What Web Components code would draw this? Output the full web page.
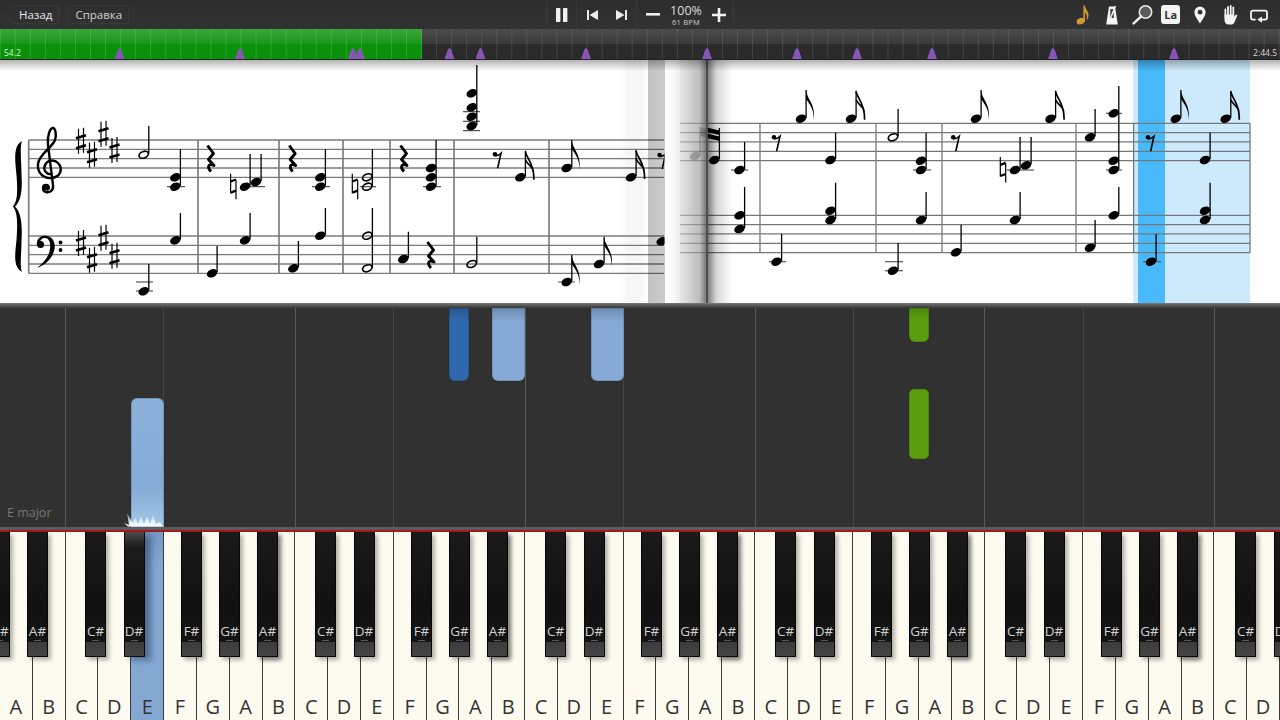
<!DOCTYPE html>
<html>
<head>
<meta charset="utf-8">
<title>Synthesia</title>
<style>
  html, body { margin: 0; height: 720px; overflow: hidden; background: #2f2f2f; }
  body { display: flex; flex-direction: column; font-family: "Open Sans", "Liberation Sans", sans-serif; }
</style>
</head>
<body>
<synth-toolbar></synth-toolbar>
<synth-timeline></synth-timeline>
<score-sheet></score-sheet>
<note-fall></note-fall>
<piano-keyboard></piano-keyboard>

<script>
class ToolButton extends HTMLElement {
  constructor() {
    super();
    this.attachShadow({ mode: 'open' });
  }

  connectedCallback() {
    const back = this.hasAttribute('back');
    this.shadowRoot.innerHTML = `
      <style>
        :host { display: block; position: relative; height: 19px; box-sizing: border-box; line-height: 18px;
          font-size: 11.5px; color: #cfcfcf; padding: 0 6px; white-space: nowrap;
          border: 1px solid ${back ? 'transparent' : '#393939'}; border-radius: 2px; }
        :host([back]) { padding: 0 7px 0 14px; color: #e6e6e6; border-left: 0; }
        svg { position: absolute; left: 0; top: -1px; }
      </style>
      ${back ? '<svg width="54" height="19"><path d="M53.5 .5H8L.7 9.5 8 18.5H53.5Z" fill="none" stroke="#393939"/></svg>' : ''}
      <slot></slot>`;
  }
}

class IconCell extends HTMLElement {
  constructor() {
    super();
    this.attachShadow({ mode: 'open' });
  }

  connectedCallback() {
    const w = this.getAttribute('width') || 30;
    this.shadowRoot.innerHTML = `
      <style>
        :host { display: flex; align-items: center; justify-content: center; height: 29px; width: ${w}px;
          box-sizing: border-box; flex: none; }
        :host([sep]) { border-right: 1px solid #393939; }
        :host([first]) { border-left: 1px solid #393939; }
      </style>
      <slot></slot>`;
  }
}

class SynthToolbar extends HTMLElement {
  constructor() {
    super();
    this.attachShadow({ mode: 'open' });
  }

  connectedCallback() {
    this.shadowRoot.innerHTML = `
      <style>
        :host { display: grid; grid-template-columns: 1fr auto 1fr; height: 29px; flex: none;
          background: linear-gradient(#2d2d2d, #323232); color: #fff; }
        .left { display: flex; gap: 8px; padding: 5px 0 0 5px; }
        .center, .right { display: flex; }
        .right { justify-content: flex-end; padding-right: 6px; }
        svg { display: block; overflow: visible; }
        .speed { text-align: center; line-height: 1; padding-top: 2px; }
        .speed b { display: block; font-weight: 400; font-size: 12.5px; color: #dcdcdc; }
        .speed i { display: block; font-style: normal; font-size: 7.5px; color: #cfcfcf; margin-top: 1px; letter-spacing: .2px; }
        .la { display: block; width: 19px; height: 19px; line-height: 20px; border-radius: 3px; background: #f4f4f4;
          color: #333; font-size: 11px; font-weight: 700; text-align: center; }
      </style>
      <div class="left">
        <tool-button back>Назад</tool-button>
        <tool-button>Справка</tool-button>
      </div>
      <div class="center">
        <icon-cell first sep width="31">
          <svg width="12" height="14"><rect x="0" width="4.4" height="14" rx=".8" fill="#f2f2f2"/><rect x="7" width="4.4" height="14" rx=".8" fill="#f2f2f2"/></svg>
        </icon-cell>
        <icon-cell width="30">
          <svg width="11" height="10"><path d="M0 0H2V10H0ZM11 0V10L2.5 5Z" fill="#ececec"/></svg>
        </icon-cell>
        <icon-cell sep width="30">
          <svg width="11" height="10"><path d="M11 0H9V10H11ZM0 0V10L8.5 5Z" fill="#ececec"/></svg>
        </icon-cell>
        <icon-cell width="31">
          <svg width="14" height="3"><rect width="14" height="2.6" fill="#f0f0f0"/></svg>
        </icon-cell>
        <icon-cell width="36">
          <div class="speed"><b>100%</b><i>61 BPM</i></div>
        </icon-cell>
        <icon-cell sep width="30">
          <svg width="14" height="14"><path d="M5.7 0H8.3V5.7H14V8.3H8.3V14H5.7V8.3H0V5.7H5.7Z" fill="#f4f4f4"/></svg>
        </icon-cell>
      </div>
      <div class="right">
        <icon-cell width="29.5">
          <svg width="24" height="24" viewBox="-12 -12 24 24"><ellipse cx="-1.3" cy="6.2" rx="4.2" ry="3.1" transform="rotate(-20 -1.3 6.2)" fill="#cf9a34"/><path d="M1.4 -9.5H3C3.2 -5 7.4 -3.5 6.4 1.5C6 3.6 5.2 5 4.4 5.6C5.2 3 5.2 -.5 3 -2.5V6.4H1.4Z" fill="#cf9a34"/></svg>
        </icon-cell>
        <icon-cell width="29.5">
          <svg width="24" height="24" viewBox="-12 -12 24 24"><path d="M-3 -8.5H3L5.8 9.5H-5.8Z" fill="#f4f4f4"/><path d="M-1.6 -6H1.4L1.8 3L-1.8 3Z" fill="#3a3a3a"/><path d="M-1.6 3.5L3.4 -9" stroke="#f4f4f4" stroke-width="1.4"/></svg>
        </icon-cell>
        <icon-cell width="29.5">
          <svg width="24" height="24" viewBox="-12 -12 24 24"><circle cx="4.5" cy="-3" r="6.2" fill="#5a5a5a" stroke="#e8e8e8" stroke-width="1.6"/><path d="M.2 1.4L-7.4 8.4" stroke="#f4f4f4" stroke-width="2.4" stroke-linecap="round"/></svg>
        </icon-cell>
        <icon-cell width="29.5"><span class="la">La</span></icon-cell>
        <icon-cell width="29.5">
          <svg width="24" height="24" viewBox="-12 -12 24 24"><path d="M0 8.5C-2 5 -5.6 .8 -5.6 -2.8A5.6 5.6 0 0 1 5.6 -2.8C5.6 .8 2 5 0 8.5Z" fill="#f6f6f6"/><circle cy="-2.8" r="2.4" fill="#333"/></svg>
        </icon-cell>
        <icon-cell width="29.5">
          <svg width="24" height="24" viewBox="-12 -12 24 24"><path d="M-4.6 2V-5.5M-2 1V-8M.7 1V-9M3.3 1.5V-7.5" stroke="#f4f4f4" stroke-width="1.8" stroke-linecap="round"/><path d="M-5.5 -.5V5C-5.6 7.5 -4 9.5 -1.5 9.5H1.5C3.4 9.5 4.2 8 5 6L7.4 .2L6 -.6L4.2 2V-.5Z" fill="#f4f4f4"/></svg>
        </icon-cell>
        <icon-cell width="29.5">
          <svg width="24" height="24" viewBox="-12 -12 24 24"><path d="M-3.4 4.6H-6A2 2 0 0 1 -8 2.6V-2.4A2 2 0 0 1 -6 -4.4H6A2 2 0 0 1 8 -2.4V2.6A2 2 0 0 1 6 4.6H2" fill="none" stroke="#f4f4f4" stroke-width="1.8"/><path d="M3 1.4V7.8L-1.8 4.6Z" fill="#f4f4f4"/></svg>
        </icon-cell>
      </div>`;
  }
}

class SynthTimeline extends HTMLElement {
  constructor() {
    super();
    this.attachShadow({ mode: 'open' });
  }

  connectedCallback() {
    const marks = [119.5, 240, 353, 360, 449.5, 480.5, 586, 707, 797, 857, 932, 1053, 1174];
    this.shadowRoot.innerHTML = `
      <style>
        :host { display: block; position: relative; height: 30px; flex: none; border-bottom: 1px solid #222;
          background: linear-gradient(#4c4c4c, #3a3a3a 50%, #2b2b2b 50%, #2a2a2a); }
        .ticks { position: absolute; inset: 0;
          background: repeating-linear-gradient(90deg, transparent 0 14px, rgba(110,110,110,.4) 14px 15px) 0.7px 0 / 15.05px 100%; }
        .done { position: relative; width: 422px; height: 100%;
          background: repeating-linear-gradient(90deg, transparent 0 14px, rgba(90,210,90,.38) 14px 15px) 0.7px 0 / 15.05px 100%,
            linear-gradient(#3aa53a, #1b961b 50%, #099209 50%, #0a8f0a); }
        .mark { position: absolute; bottom: 0; width: 10px; height: 11px; margin-left: -5px; background: #8656b4;
          clip-path: polygon(0 100%, 36% 8%, 50% 0, 64% 8%, 100% 100%); }
        span { position: absolute; top: 19px; font-size: 8.5px; line-height: 10px; color: #d6d6d6; }
        .start { left: 4px; color: #d8f0d8; }
        .end { right: 3px; }
      </style>
      <div class="ticks"></div>
      <div class="done"></div>
      ${marks.map(x => `<div class="mark" style="left:${x}px"></div>`).join('')}
      <span class="start">54.2</span>
      <span class="end">2:44.5</span>`;
  }
}

// little engraving helpers for the score
const head = (x, y, hollow) => hollow
  ? `<ellipse cx="${x}" cy="${y}" rx="4.9" ry="3.2" transform="rotate(-22 ${x} ${y})" fill="none" stroke="#000" stroke-width="1.7"/>`
  : `<ellipse cx="${x}" cy="${y}" rx="5.5" ry="4" transform="rotate(-25 ${x} ${y})" fill="#000"/>`;

const flag8 = (s, t) => `<path d="M${s} ${t}C${s + 1} ${t + 10} ${s + 10} ${t + 14} ${s + 7.5} ${t + 30}C${s + 8} ${t + 18} ${s + 3} ${t + 14} ${s} ${t + 9}Z"/>`;
const flag16 = (s, t) => `<path d="M${s} ${t + 1}C${s + 1} ${t + 8} ${s + 9} ${t + 12} ${s + 8.5} ${t + 29}M${s} ${t + 9}C${s + 2} ${t + 14} ${s + 8} ${t + 16} ${s + 8} ${t + 21}" fill="none" stroke="#000" stroke-width="1.7"/>`;

// [x, head ys, stem top, kind]
const note = ([x, ys, top, kind]) => {
  const s = x + 5.1;
  const low = Math.max(...ys);
  let out = `<path d="M${s} ${top}V${low - 1}" stroke="#000" stroke-width="1.3"/>`;
  out += ys.map(y => head(x, y, kind === 'h')).join('');
  if (kind === 8) out += flag8(s, top);
  if (kind === 16) out += flag16(s, top);
  return out;
};

const ledger = ([a, b, y]) => `<path d="M${a} ${y}H${b}" stroke="#555" stroke-width="1.2"/>`;
const sharp = ([x, y]) => `<path d="M${x - 2.5} ${y - 13}V${y + 12}M${x + 2.5} ${y - 14}V${y + 11}" stroke="#000" stroke-width="1.2"/><path d="M${x - 5} ${y - 3.5}L${x + 5} ${y - 6.5}M${x - 5} ${y + 6.5}L${x + 5} ${y + 3.5}" stroke="#000" stroke-width="2.7"/>`;
const natural = ([x, y]) => `<path d="M${x - 2.7} ${y - 13}V${y + 6.5}M${x + 2.7} ${y - 6.5}V${y + 12.5}" stroke="#000" stroke-width="1.2"/><path d="M${x - 2.7} ${y - 5.2}L${x + 2.7} ${y - 7.2}M${x - 2.7} ${y + 6}L${x + 2.7} ${y + 4}" stroke="#000" stroke-width="2.3"/>`;
const rest4 = ([x, y]) => `<path d="M${x - 2.5} ${y - 13}L${x + 3.5} ${y - 5}L${x - 1.5} ${y + 1}L${x + 4} ${y + 7}C${x - 2} ${y + 4} ${x - 3} ${y + 9} ${x + 1} ${y + 13}" fill="none" stroke="#000" stroke-width="2.9" stroke-linejoin="round"/>`;
const rest8 = ([x, y]) => `<circle cx="${x}" cy="${y}" r="2.3"/><path d="M${x} ${y + 1.3}Q${x + 3} ${y + 2} ${x + 6} ${y - 1}L${x + 2.6} ${y + 14}" fill="none" stroke="#000" stroke-width="1.6"/>`;
const staff = (x1, x2, top, color, w) => [0, 1, 2, 3, 4].map(i => `<path d="M${x1} ${top + i * 9.33}H${x2}" stroke="${color}" stroke-width="${w}"/>`).join('');
const bar = (x, y1, y2, w) => `<path d="M${x} ${y1}V${y2}" stroke="#777" stroke-width="${w}"/>`;

class ScoreSheet extends HTMLElement {
  constructor() {
    super();
    this.attachShadow({ mode: 'open' });
  }

  connectedCallback() {
    const leftNotes = [
      [143.7, [154.7], 126, 'h'], [175.3, [177.3, 186.7], 149.3], [175.3, [240.3], 213], [143.7, [291.3], 264],
      [245, [186.7], 154], [256, [182], 154], [245, [240.3], 213], [212, [273.3], 246],
      [320.3, [177.3, 186.7], 149.3], [320.3, [235.7], 208], [293.3, [268.3], 241],
      [367.3, [177.3, 186.7], 149.3, 'h'], [367.3, [235.7, 268.3], 208, 'h'],
      [431, [168, 177.3, 186.7], 140], [403.3, [259], 231.7],
      [471.7, [93.3, 107.3, 116.7, 126], 65], [471.7, [264], 236.7, 'h'],
      [520.3, [177.3], 150.7, 16], [566.7, [168], 140, 8], [631, [177.3], 150, 16],
      [566.7, [282], 255, 8], [599, [264], 236.7, 8], [661.7, [241.3], 214]
    ];
    const leftLedgers = [[167, 185, 186.7], [136, 153, 282], [136, 153, 291], [248, 265, 186.7], [312, 330, 186.7],
      [360, 376, 186.7], [423, 441, 186.7], [463, 480, 111.7], [463, 480, 121.3], [463, 480, 130.7], [558, 575, 282]];
    const rightNotes = [
      [714.3, [160], 128], [739.5, [170], 142], [739.5, [215.3, 229], 187],
      [801, [118.7], 90, 8], [851, [118.7], 90.7, 16], [830.5, [160], 132.7], [830.5, [210.7, 220], 182.7], [776.5, [261.7], 234],
      [893, [137.3], 109, 'h'], [921, [160.7, 170], 132.7], [921, [220], 192], [893, [270.7], 243],
      [976, [118.7], 90, 8], [1050.5, [118.7], 90.7, 16], [1015, [170], 137], [1026, [165.3], 137], [1015, [220], 192], [956, [252.3], 224.7],
      [1090, [137.3], 109], [1113.7, [113.3, 160.7, 170], 86], [1113.7, [215.3], 187], [1090, [247.7], 220],
      [1175.8, [118.7], 90, 8], [1225.7, [118.7], 90.7, 16], [1205, [160], 132.7], [1205, [210.7, 220], 182.7], [1151, [261.7], 234]
    ];
    const rightLedgers = [[731, 748, 170], [769, 786, 261.7], [885, 903, 261.7], [885, 903, 270.7], [913, 931, 170],
      [1007, 1034, 170], [1106, 1122, 113.3], [1106, 1122, 170], [1143, 1161, 261.7]];
    const sharpsAt = [[81, 141.7], [92, 155.7], [103.5, 134.7], [114.5, 151], [81, 244], [92, 260.7], [103.5, 238.7], [114.5, 256.7]];

    const leftPage = `
      ${staff(28.7, 664, 140, '#7c7c7c', 1.3)}
      ${staff(28.7, 664, 236, '#7c7c7c', 1.3)}
      ${bar(28.7, 140, 273.3, 1.6)}
      ${[198, 279, 343, 390, 454, 549].map(x => bar(x, 140, 273.3, 1.6)).join('')}
      ${leftLedgers.map(ledger).join('')}
      <path d="M22 141C13 146 15 160 16.5 175C17.5 190 18 200 13 206.5C18 213 17.5 225 16.5 240C15 255 13 267 22 272C19.5 266 21.5 255 21.5 240C22.5 225 21 212 15 206.5C21 201 22.5 190 21.5 175C21.5 160 19.5 147 22 141Z"/>
      <path d="M52 174C46 175 43 170 45 165C47 160 54 159 58 163C63 168 61 177 52 178C43 179 37 172 38 164C39 154 52 148 55 140C57 134 55 128 53 128C50 128 47 136 48 145L53 185C54 191 49 193 46 192C42 191 42 185 46 185C49 185 50 189 47 190" fill="none" stroke="#000" stroke-width="2.4"/>
      <circle cx="46" cy="187.5" r="2.8"/>
      <path d="M37 245C36 238 42 235 47 236C54 237 56 245 54 251C52 259 45 265 37 268C43 263 49 257 50 249C51 243 49 238 45 238C42 238 40 240 40 243Z"/>
      <circle cx="40.5" cy="244.5" r="3.5"/>
      <circle cx="60.5" cy="242.5" r="1.9"/><circle cx="60.5" cy="250" r="1.9"/>
      ${sharpsAt.map(sharp).join('')}
      ${leftNotes.map(note).join('')}
      ${[[233.3, 186.7], [355, 186.7]].map(natural).join('')}
      ${[[210, 158.5], [291.7, 158.5], [403, 158.5], [430, 255]].map(rest4).join('')}
      ${[[495, 154.3], [659.6, 155]].map(rest8).join('')}`;

    const rightPage = `
      ${staff(708, 1250, 123.3, '#777', 1.2)}
      ${staff(708, 1250, 215.3, '#777', 1.2)}
      ${[760, 876, 942, 1076, 1133.6, 1250].map(x => bar(x, 123.3, 252.7, 1.3)).join('')}
      ${rightLedgers.map(ledger).join('')}
      ${rightNotes.map(note).join('')}
      <path d="M706.7 127.5L719.4 130.5V135L706.7 132ZM706.7 133.5L719.4 136.5V141L706.7 138Z"/>
      ${natural([1003, 170])}
      ${[[774, 137.3], [953.2, 137.3], [1148, 137.3]].map(rest8).join('')}`;

    this.shadowRoot.innerHTML = `
      <style>
        :host { display: block; height: 248px; flex: none; background: #fff; }
        svg { display: block; }
        .rule { height: 5px; background: linear-gradient(#7a7a7a, #5c5c5c 40%, #383838); }
      </style>
      <svg width="1280" height="243" viewBox="0 60 1280 243">
        <defs>
          <clipPath id="page"><rect x="0" y="60" width="664.5" height="243"/></clipPath>
          <linearGradient id="top" x2="0" y2="1"><stop offset="0" stop-color="#000" stop-opacity=".3"/><stop offset="1" stop-color="#000" stop-opacity="0"/></linearGradient>
          <linearGradient id="band" x2="1"><stop offset="0" stop-color="#000" stop-opacity=".24"/><stop offset="1" stop-color="#000" stop-opacity=".2"/></linearGradient>
          <linearGradient id="faint" x2="1"><stop offset="0" stop-color="#000" stop-opacity="0"/><stop offset=".3" stop-color="#000" stop-opacity=".035"/><stop offset=".7" stop-color="#000" stop-opacity=".035"/><stop offset="1" stop-color="#000" stop-opacity="0"/></linearGradient>
          <linearGradient id="gap" x2="1"><stop offset="0" stop-color="#fff"/><stop offset=".6" stop-color="#fafafa"/><stop offset="1" stop-color="#ececec"/></linearGradient>
          <linearGradient id="fold" x2="1"><stop offset="0" stop-color="#000" stop-opacity=".1"/><stop offset=".75" stop-color="#000" stop-opacity=".26"/><stop offset="1" stop-color="#000" stop-opacity=".52"/></linearGradient>
          <linearGradient id="fall" x2="1"><stop offset="0" stop-color="#000" stop-opacity=".5"/><stop offset=".35" stop-color="#000" stop-opacity=".16"/><stop offset="1" stop-color="#000" stop-opacity="0"/></linearGradient>
        </defs>
        <rect x="1133.3" y="60" width="116.7" height="243" fill="#cdeafc"/>
        <rect x="1138" y="60" width="27" height="243" fill="#48b9fb"/>
        <g clip-path="url(#page)">${leftPage}</g>
        <rect x="620" y="60" width="28" height="243" fill="url(#faint)"/>
        <rect x="648" y="60" width="17" height="243" fill="url(#band)"/>
        <rect x="665" y="60" width="15" height="243" fill="url(#gap)"/>
        <rect x="680" y="60" width="28" height="243" fill="#fff"/>
        ${staff(680, 708, 123.3, '#b4b4b4', 1.1)}${staff(680, 708, 215.3, '#b4b4b4', 1.1)}
        <g opacity=".22"><ellipse cx="695" cy="156" rx="5.5" ry="4" transform="rotate(-25 695 156)"/><path d="M700 156V127" stroke="#000" stroke-width="1.3"/><path d="M700 127L708 129V138L700 136Z"/></g>
        ${rightPage}
        <rect x="680" y="60" width="26" height="243" fill="url(#fold)"/>
        <rect x="706" y="60" width="2" height="243" fill="#4e4e4e"/>
        <rect x="708" y="60" width="24" height="243" fill="url(#fall)"/>
        <rect x="0" y="60" width="1280" height="11" fill="url(#top)"/>
      </svg>
      <div class="rule"></div>`;
  }
}

class FallNote extends HTMLElement {
  constructor() {
    super();
    this.attachShadow({ mode: 'open' });
  }

  connectedCallback() {
    const a = n => this.getAttribute(n);
    this.shadowRoot.innerHTML = `
      <style>
        :host { position: absolute; left: ${a('x')}px; top: ${a('y')}px; width: ${a('w')}px; height: ${a('h')}px;
          box-sizing: border-box; background: ${a('color')}; border-radius: ${a('r') || '0 0 6px 6px'};
          box-shadow: inset 0 0 0 1px rgba(0,0,0,.14), 0 0 1px #1b1b1b; }
      </style>`;
  }
}

class NoteFall extends HTMLElement {
  constructor() {
    super();
    this.attachShadow({ mode: 'open' });
  }

  connectedCallback() {
    const strong = [65, 295, 525, 755, 984, 1214];
    const weak = [163, 393, 623, 853, 1083];
    this.shadowRoot.innerHTML = `
      <style>
        :host { display: block; position: relative; height: 219px; flex: none; background: #313131; overflow: hidden; }
        i { position: absolute; top: 0; bottom: 0; width: 1px; }
        span { position: absolute; left: 7px; top: 197px; font-size: 12.5px; line-height: 16px; color: #777; }
        svg { position: absolute; left: 120px; top: 198px; filter: blur(.5px); }
      </style>
      ${strong.map(x => `<i style="left:${x}px;background:#5a5a5a"></i>`).join('')}
      ${weak.map(x => `<i style="left:${x}px;background:#454545"></i>`).join('')}
      <span>E major</span>
      <fall-note x="449.3" y="0" w="20" h="73" color="linear-gradient(#28558c, #2f69ad 12px)"></fall-note>
      <fall-note x="491.7" y="0" w="33" h="73" color="linear-gradient(#6d8db5, #86aad5 14px)"></fall-note>
      <fall-note x="590.7" y="0" w="33" h="73" color="linear-gradient(#6d8db5, #86aad5 14px)"></fall-note>
      <fall-note x="909.3" y="0" w="20" h="34" color="linear-gradient(#4b8510, #5a9e0f 10px)"></fall-note>
      <fall-note x="909.3" y="81" w="20" h="70" r="5px" color="#5a9e0f"></fall-note>
      <fall-note x="131" y="90" w="33" h="129" r="6px 6px 0 0" color="linear-gradient(#8bb0da, #86abd6 70%, #a4c6e8)"></fall-note>
      <svg width="46" height="22">
        <defs><linearGradient id="spark" x2="0" y2="1"><stop offset=".2" stop-color="#dcecfb" stop-opacity=".5"/><stop offset=".8" stop-color="#f2f8fe"/></linearGradient></defs>
        <path d="M4 17L9 19L7 7L13 17L15 11L18 18L21 10L24 18L27 10L30 18L33 9L36 18L40 16L43 20.5H8Z" fill="url(#spark)"/>
      </svg>`;
  }
}

class PianoKey extends HTMLElement {
  constructor() {
    super();
    this.attachShadow({ mode: 'open' });
  }

  connectedCallback() {
    this.shadowRoot.innerHTML = `
      <style>
        :host { display: flex; align-items: flex-end; justify-content: center; box-sizing: border-box;
          background: #fdfaef; border-right: 1px solid #3c3c3c; color: #333; font-size: 20px; line-height: 26px; }
        :host([active]) { background: linear-gradient(#7499c4, #84a8d2 20%); }
      </style>
      <slot></slot>`;
  }
}

class BlackKey extends HTMLElement {
  constructor() {
    super();
    this.attachShadow({ mode: 'open' });
  }

  connectedCallback() {
    const x = this.getAttribute('x');
    this.shadowRoot.innerHTML = `
      <style>
        :host { position: absolute; left: ${x}px; top: 0; width: 21px; height: 125px; box-sizing: border-box;
          background: linear-gradient(#1a1a1a, #111 60%, #161616); box-shadow: 3px 3px 4px rgba(0,0,0,.3);
          border: solid #070707; border-width: 0 1px 1px; border-radius: 0 0 1px 1px; }
        :host([glow]) { background: linear-gradient(#4a4a4a, #1c1c1c 12%, #111 60%, #161616); box-shadow: 6px 3px 6px rgba(20,40,70,.45); }
        .name { position: absolute; left: -5px; right: -5px; top: 91px; text-align: center; font-size: 13.5px; line-height: 16px; color: #d2d2d2; }
        .lip { position: absolute; left: 0; right: 0; bottom: 0; height: 14px; background: linear-gradient(#3c3c3c, #444); }
        .dash { position: absolute; left: 6px; right: 6px; bottom: 15px; height: 1px; background: #5a5a5a; }
      </style>
      <div class="dash"></div>
      <div class="lip"></div>
      <div class="name"><slot></slot></div>`;
  }
}

class PianoKeyboard extends HTMLElement {
  constructor() {
    super();
    this.attachShadow({ mode: 'open' });
  }

  connectedCallback() {
    const letters = 'ABCDEFG';
    let whites = '';
    for (let i = 0; i < 39; i++) {
      whites += `<piano-key${i === 4 ? ' active' : ''}>${letters[i % 7]}</piano-key>`;
    }
    const octave = [['A#', 27], ['C#', 85], ['D#', 123.5], ['F#', 181], ['G#', 219], ['A#', 257]];
    let blacks = '<black-key x="-11">G#</black-key>';
    for (let o = 0; o < 6; o++) {
      octave.forEach(([name, x]) => {
        const left = x + o * 230;
        if (left < 1280) {
          blacks += `<black-key x="${left}"${o === 0 && name === 'D#' ? ' glow' : ''}>${name}</black-key>`;
        }
      });
    }
    this.shadowRoot.innerHTML = `
      <style>
        :host { display: flex; flex-direction: column; flex: 1; min-height: 0; }
        .edge { height: 3px; background: #5c5c5c; flex: none; }
        .red { height: 2px; background: #a3181e; flex: none; }
        .keys { position: relative; flex: 1; display: grid; grid-template-columns: repeat(39, 1fr); overflow: hidden; }
      </style>
      <div class="edge"></div>
      <div class="red"></div>
      <div class="keys">${whites}${blacks}</div>`;
  }
}

customElements.define('tool-button', ToolButton);
customElements.define('icon-cell', IconCell);
customElements.define('synth-toolbar', SynthToolbar);
customElements.define('synth-timeline', SynthTimeline);
customElements.define('score-sheet', ScoreSheet);
customElements.define('fall-note', FallNote);
customElements.define('note-fall', NoteFall);
customElements.define('piano-key', PianoKey);
customElements.define('black-key', BlackKey);
customElements.define('piano-keyboard', PianoKeyboard);
</script>
</body>
</html>
